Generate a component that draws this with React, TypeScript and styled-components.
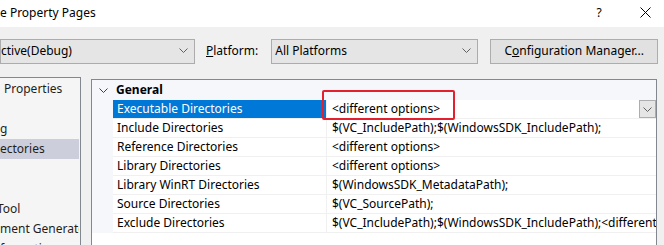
import React from "react";
import styled, { createGlobalStyle } from "styled-components";

const Global = createGlobalStyle`
  html, body { margin: 0; padding: 0; background: #f0f0f0; }
  body { font-family: "Noto Sans", "Noto Sans CJK SC", sans-serif; font-size: 12px; color: #000; }
  * { box-sizing: border-box; }
`;

const Window = styled.div`
  width: 664px;
  height: 245px;
  overflow: hidden;
  background: #f0f0f0;
  display: flex;
  flex-direction: column;
`;

const TitleBar = styled.div`
  height: 27px;
  background: #fff;
  display: flex;
  align-items: center;
  flex-shrink: 0;
`;

const Title = styled.div`
  flex: 1;
  font-size: 12px;
  padding-bottom: 3px;
  white-space: nowrap;
`;

const TitleButton = styled.div<{ $w: number; $mr: number }>`
  width: ${(p) => p.$w}px;
  margin-right: ${(p) => p.$mr}px;
  height: 27px;
  display: flex;
  align-items: center;
  justify-content: center;
  font-size: 12px;
  color: #000;
  padding-bottom: 3px;
`;

const Toolbar = styled.div`
  display: flex;
  align-items: center;
  padding-top: 11px;
  height: 37px;
  flex-shrink: 0;
`;

const Combo = styled.div<{ $w: number; $ml: number }>`
  width: ${(p) => p.$w}px;
  margin-left: ${(p) => p.$ml}px;
  height: 25px;
  border: 1px solid #acacac;
  background: #e5e5e5;
  display: flex;
  align-items: center;
  padding: 0 6px 1px 3px;
  white-space: nowrap;
  overflow: hidden;
`;

const ComboText = styled.span<{ $pad: number }>`
  flex: 1;
  margin-left: ${(p) => p.$pad}px;
`;

const Label = styled.span`
  margin-left: 11px;
  padding-bottom: 1px;
`;

const Button = styled.div`
  margin-left: 12px;
  width: 168px;
  height: 25px;
  border: 1px solid #adadad;
  background: #e1e1e1;
  display: flex;
  align-items: center;
  justify-content: center;
  padding-bottom: 1px;
`;

const Body = styled.div`
  display: flex;
  align-items: flex-start;
  margin-top: 13px;
  flex: 1;
  min-height: 0;
`;

const Tree = styled.div`
  width: 81px;
  height: 200px;
  background: #f5f5f5;
  border-top: 1px solid #828790;
  border-right: 1px solid #828790;
  padding-top: 1px;
  overflow: hidden;
  flex-shrink: 0;
`;

const TreeItem = styled.div<{ $sel?: boolean; $x: number }>`
  height: 20px;
  line-height: 20px;
  white-space: nowrap;
  width: 79px;
  padding-left: ${(p) => Math.max(p.$x, 0)}px;
  text-indent: ${(p) => Math.min(p.$x, 0)}px;
  background: ${(p) => (p.$sel ? "#cccedb" : "transparent")};
  color: #1e1e1e;
  overflow: hidden;
`;

const Grid = styled.div`
  position: relative;
  margin-left: 10px;
  margin-top: 2px;
  width: 566px;
  height: 200px;
  background: #fff;
  border: 1px solid #828790;
  border-bottom: none;
  flex-shrink: 0;
`;

const Header = styled.div`
  height: 20px;
  display: flex;
  align-items: center;
  background: #f5f7fb;
`;

const Chevron = styled.span`
  width: 21px;
  display: flex;
  justify-content: center;
  padding-left: 2px;
`;

const HeaderText = styled.span`
  font-weight: 700;
  padding-left: 3px;
  padding-bottom: 1px;
`;

const Row = styled.div`
  display: flex;
  height: 19px;
`;

const Gutter = styled.div`
  width: 21px;
  background: #f5f7fb;
  flex-shrink: 0;
`;

const NameCell = styled.div<{ $sel?: boolean }>`
  width: 214px;
  flex-shrink: 0;
  padding-left: 4px;
  line-height: 18px;
  border-bottom: 1px solid #f0f0f0;
  border-right: 1px solid #f0f0f0;
  background: ${(p) => (p.$sel ? "#0078d7" : "#fff")};
  color: ${(p) => (p.$sel ? "#fff" : "#000")};
  white-space: nowrap;
`;

const ValueCell = styled.div`
  flex: 1;
  display: flex;
  align-items: flex-start;
  padding-left: 5px;
  line-height: 18px;
  border-bottom: 1px solid #f0f0f0;
  white-space: nowrap;
  overflow: hidden;
`;

const ValueText = styled.span`
  flex: 1;
  overflow: hidden;
`;

const DropButton = styled.div`
  width: 17px;
  height: 18px;
  border: 1px solid #adadad;
  background: #e5e5e5;
  display: flex;
  align-items: center;
  justify-content: center;
  flex-shrink: 0;
`;

const Highlight = styled.div`
  position: absolute;
  left: 230px;
  top: 10px;
  width: 133px;
  height: 30px;
  border: 2px solid #e5202e;
  border-radius: 2px;
  pointer-events: none;
`;

const ChevronDown = ({ w = 9, color = "#606060" }: { w?: number; color?: string }) => (
  <svg width={w} height={5} viewBox="0 0 9 5">
    <path d="M0.5 0.5 L4.5 4.5 L8.5 0.5" fill="none" stroke={color} strokeWidth="1" />
  </svg>
);

const rows = [
  { name: "Executable Directories", value: "<different options>", sel: true },
  { name: "Include Directories", value: "$(VC_IncludePath);$(WindowsSDK_IncludePath);" },
  { name: "Reference Directories", value: "<different options>" },
  { name: "Library Directories", value: "<different options>" },
  { name: "Library WinRT Directories", value: "$(WindowsSDK_MetadataPath);" },
  { name: "Source Directories", value: "$(VC_SourcePath);" },
  { name: "Exclude Directories", value: "$(VC_IncludePath);$(WindowsSDK_IncludePath);<different options>" },
];

const tree = [
  { t: "Properties", x: 4 },
  { t: "", x: 0 },
  { t: "g", x: 0 },
  { t: "ectories", x: 0, sel: true },
  { t: "", x: 0 },
  { t: "", x: 0 },
  { t: "Tool", x: -3 },
  { t: "ment Generator", x: 0 },
  { t: "formation", x: 0 },
];

export default function App() {
  return (
    <>
      <Global />
      <Window>
        <TitleBar>
          <Title>e Property Pages</Title>
          <TitleButton $w={46} $mr={4}>?</TitleButton>
          <TitleButton $w={38} $mr={0}>
            <svg width="11" height="11" viewBox="0 0 11 11">
              <path d="M0.5 0.5 L10.5 10.5 M10.5 0.5 L0.5 10.5" stroke="#000" strokeWidth="1" />
            </svg>
          </TitleButton>
        </TitleBar>
        <Toolbar>
          <Combo $w={195} $ml={0}>
            <ComboText $pad={-3}>ctive(Debug)</ComboText>
            <ChevronDown />
          </Combo>
          <Label>
            <u>P</u>latform:
          </Label>
          <Combo $w={207} $ml={13}>
            <ComboText $pad={0}>All Platforms</ComboText>
            <ChevronDown />
          </Combo>
          <Button>
            <span>
              C<u>o</u>nfiguration Manager...
            </span>
          </Button>
        </Toolbar>
        <Body>
          <Tree>
            {tree.map((it, i) => (
              <TreeItem key={i} $x={it.x} $sel={it.sel}>
                {it.t}
              </TreeItem>
            ))}
          </Tree>
          <Grid>
            <Header>
              <Chevron>
                <ChevronDown w={9} color="#404040" />
              </Chevron>
              <HeaderText>General</HeaderText>
            </Header>
            {rows.map((r) => (
              <Row key={r.name}>
                <Gutter />
                <NameCell $sel={r.sel}>{r.name}</NameCell>
                <ValueCell>
                  <ValueText>{r.value}</ValueText>
                  {r.sel && (
                    <DropButton>
                      <ChevronDown w={9} color="#606060" />
                    </DropButton>
                  )}
                </ValueCell>
              </Row>
            ))}
            <Highlight />
          </Grid>
        </Body>
      </Window>
    </>
  );
}
